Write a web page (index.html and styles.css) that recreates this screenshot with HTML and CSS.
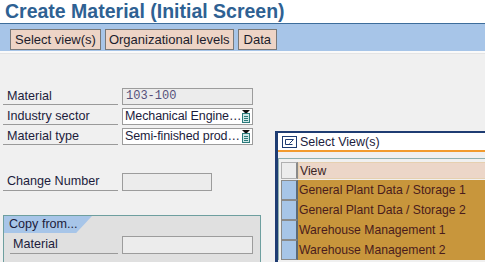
FILE: index.html
```html
<!DOCTYPE html>
<html>
<head>
<meta charset="utf-8">
<link rel="stylesheet" href="styles.css">
</head>
<body>
<div class="title">Create Material (Initial Screen)</div>
<div class="toolbar">
  <span class="btn">Select view(s)</span>
  <span class="btn btn-wide">Organizational levels</span>
  <span class="btn btn-data">Data</span>
</div>
<div class="content">
  <div class="row">
    <span class="label">Material</span>
    <span class="field field-ro mono">103-100</span>
  </div>
  <div class="row">
    <span class="label">Industry sector</span>
    <span class="field field-dd"><span class="dd-text">Mechanical Engine…</span>
      <svg class="dd-icon" width="10" height="13" viewBox="0 0 10 13"><path d="M1 0h8L5 4z" fill="#111"/><rect x="1.5" y="3.5" width="7" height="9" fill="#cfe6e6" stroke="#2a7a7a"/><path d="M3 6.5h4M3 8.5h4M3 10.5h4" stroke="#2a7a7a"/></svg>
    </span>
  </div>
  <div class="row">
    <span class="label">Material type</span>
    <span class="field field-dd"><span class="dd-text">Semi-finished prod…</span>
      <svg class="dd-icon" width="10" height="13" viewBox="0 0 10 13"><path d="M1 0h8L5 4z" fill="#111"/><rect x="1.5" y="3.5" width="7" height="9" fill="#cfe6e6" stroke="#2a7a7a"/><path d="M3 6.5h4M3 8.5h4M3 10.5h4" stroke="#2a7a7a"/></svg>
    </span>
  </div>
  <div class="row row-change">
    <span class="label">Change Number</span>
    <span class="field field-short"></span>
  </div>
  <div class="group">
    <div class="tab">Copy from...</div>
    <div class="row row-group">
      <span class="label label-group">Material</span>
      <span class="field field-ro"></span>
    </div>
  </div>
</div>

<div class="dialog">
  <div class="dlg-title">
    <svg class="dlg-icon" width="15" height="12" viewBox="0 0 15 12"><rect x="0.5" y="0.5" width="14" height="11" fill="#fff" stroke="#1e3c72"/><path d="M3.5 3.5v5h7M3.5 3.5h8l-4 4" fill="none" stroke="#1e3c72"/></svg>
    <span>Select View(s)</span>
  </div>
  <div class="dlg-body">
    <div class="tframe">
      <div class="grid">
        <div class="sel sel-head"></div><div class="cell head">View</div>
        <div class="sel"></div><div class="cell">General Plant Data / Storage 1</div>
        <div class="sel"></div><div class="cell">General Plant Data / Storage 2</div>
        <div class="sel"></div><div class="cell">Warehouse Management 1</div>
        <div class="sel"></div><div class="cell">Warehouse Management 2</div>
      </div>
    </div>
  </div>
</div>
</body>
</html>
```

FILE: styles.css
```css
html, body {
  margin: 0;
  padding: 0;
  width: 485px;
  height: 262px;
  overflow: hidden;
  background: #f0f0f0;
  font-family: "Liberation Sans", Arial, sans-serif;
  font-size: 13px;
  color: #1c1c3c;
  position: relative;
}

.title {
  height: 23px;
  line-height: 23px;
  padding-left: 5px;
  background: #fff;
  color: #2e6193;
  font-weight: bold;
  font-size: 19.5px;
  border-bottom: 1px solid #3d6d9b;
}

.toolbar {
  height: 29px;
  background: #a7c5e8;
  display: flex;
  align-items: flex-start;
  gap: 4px;
  padding: 5px 0 0 10px;
  box-sizing: border-box;
  border-bottom: 2px solid #fafafa;
  box-shadow: 0 1px 0 #e4e4e4;
}

.btn {
  height: 21px;
  line-height: 19px;
  box-sizing: border-box;
  border: 1px solid #787878;
  background: #edd4c6;
  padding: 0 4px;
  color: #1c1c2c;
  white-space: nowrap;
}
.btn-wide { padding: 0 3px; }
.btn-data { padding: 0 5px; }

.content {
  padding-top: 35px;
}

.row {
  display: flex;
  align-items: flex-end;
  height: 17px;
  margin-bottom: 3px;
}

.label {
  width: 115px;
  margin-left: 3px;
  padding-left: 4px;
  height: 17px;
  line-height: 17px;
  box-sizing: border-box;
  border-bottom: 1px solid #9a9a9a;
  white-space: nowrap;
  font-size: 12.6px;
}

.field {
  margin-left: 4px;
  width: 131px;
  height: 17px;
  box-sizing: border-box;
  border: 1px solid #9c9c9c;
  background: #ececec;
  line-height: 15px;
  padding-left: 3px;
  display: flex;
  align-items: center;
  white-space: nowrap;
}

.field-ro { background: #ececec; }
.mono {
  font-family: "Liberation Mono", "Courier New", monospace;
  font-size: 12px;
  color: #55507a;
}

.field-dd {
  background: #fff;
  justify-content: space-between;
  padding-left: 2px;
  padding-right: 1px;
}
.dd-text {
  font-size: 12.5px;
  letter-spacing: -0.1px;
}
.dd-icon { flex: none; }

.row-change {
  margin-top: 28px;
  height: 18px;
}
.row-change .label { height: 18px; }
.field-short {
  width: 90px;
  height: 18px;
}

.group {
  margin: 24px 0 0 3px;
  width: 258px;
  height: 60px;
  box-sizing: border-box;
  border: 1px solid #6e9f9f;
  background: #e0e0e0;
}

.tab {
  width: 88px;
  height: 17px;
  line-height: 16px;
  padding-left: 5px;
  box-sizing: border-box;
  background: #a7c5e8;
  clip-path: polygon(0 0, 100% 0, 82% 100%, 0 100%);
  color: #1c1c3c;
  font-size: 12.6px;
}

.row-group {
  margin-top: 3px;
  height: 18px;
}
.label-group {
  margin-left: 6px;
  width: 108px;
  height: 18px;
  padding-left: 3px;
}
.row-group .field { height: 18px; }

.dialog {
  position: absolute;
  left: 275px;
  top: 131px;
  right: -10px;
  bottom: -10px;
  border-left: 3px solid #1e3c72;
  border-top: 2px solid #1e3c72;
  background: #f0f0f0;
}

.dlg-title {
  height: 17px;
  background: #fff;
  border-bottom: 2px solid #f29b2f;
  display: flex;
  align-items: center;
  gap: 3px;
  padding-left: 4px;
  color: #1c1c3c;
  font-size: 12.5px;
}
.dlg-icon { flex: none; }

.dlg-body {
  padding-top: 6px;
}

.tframe {
  border-left: 1px solid #8fb0b0;
  border-top: 1px solid #8fb0b0;
  padding: 3px 0 0 2px;
}

.grid {
  display: grid;
  grid-template-columns: 17px 1fr;
  grid-auto-rows: 20px;
  grid-template-rows: 18px;
}

.sel {
  box-sizing: border-box;
  background: #a7c5e8;
  border: 1px solid #8a8a8a;
  border-right: 2px solid #5a6a7a;
}
.sel-head {
  background: #ececec;
  border-color: #b0b0b0;
  border-right: 2px solid #8a8a8a;
  margin-bottom: 1px;
}

.cell {
  background: #c8963c;
  color: #4a1c1c;
  line-height: 20px;
  padding-left: 1px;
  white-space: nowrap;
  font-size: 12.2px;
}
.cell.head {
  background: #ecd6c8;
  color: #3a2424;
  line-height: 16px;
  border: 1px solid #e6d0b0;
  margin-bottom: 1px;
}
```
